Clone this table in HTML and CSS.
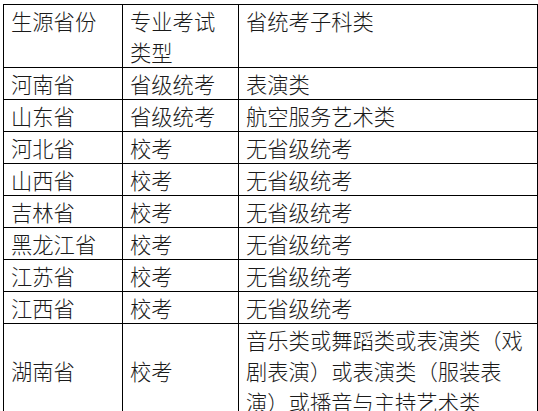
FILE: index.html
```html
<!DOCTYPE html>
<html lang="zh">
<head>
<meta charset="utf-8">
<link rel="stylesheet" href="styles.css">
</head>
<body>
<table class="tbl">
  <colgroup>
    <col class="c1">
    <col class="c2">
    <col class="c3">
  </colgroup>
  <tr class="head">
    <td>生源省份</td>
    <td>专业考试类型</td>
    <td>省统考子科类</td>
  </tr>
  <tr><td>河南省</td><td>省级统考</td><td>表演类</td></tr>
  <tr><td>山东省</td><td>省级统考</td><td>航空服务艺术类</td></tr>
  <tr><td>河北省</td><td>校考</td><td>无省级统考</td></tr>
  <tr><td>山西省</td><td>校考</td><td>无省级统考</td></tr>
  <tr><td>吉林省</td><td>校考</td><td>无省级统考</td></tr>
  <tr><td>黑龙江省</td><td>校考</td><td>无省级统考</td></tr>
  <tr><td>江苏省</td><td>校考</td><td>无省级统考</td></tr>
  <tr><td>江西省</td><td>校考</td><td>无省级统考</td></tr>
  <tr><td>湖南省</td><td>校考</td><td>音乐类或舞蹈类或表演类（戏剧表演）或表演类（服装表演）或播音与主持艺术类</td></tr>
</table>
</body>
</html>
```
FILE: styles.css
```css
html, body {
  margin: 0;
  padding: 0;
  background: #ffffff;
}
body {
  padding: 4px 0 0 3px;
  font-family: "Noto Sans CJK SC", "Microsoft YaHei", sans-serif;
  font-size: 21.3px;
  font-weight: 300;
  color: #1a1a1a;
}
.tbl {
  border-collapse: collapse;
  table-layout: fixed;
  width: 534px;
}
.c1 { width: 119px; }
.c2 { width: 116px; }
.c3 { width: 299px; }
.tbl td {
  border: 1px solid #000000;
  padding: 0 7px;
  line-height: 31px;
  vertical-align: middle;
  word-break: break-all;
}
.head td {
  vertical-align: top;
}
```
